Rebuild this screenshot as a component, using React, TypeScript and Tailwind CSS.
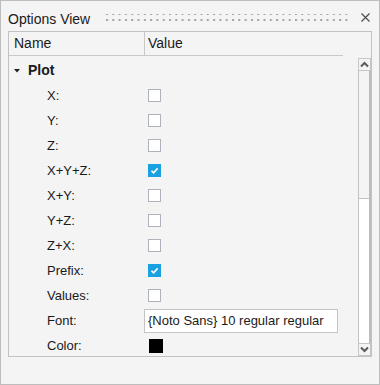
const rows: { label: string; kind: "check" | "font" | "color"; checked?: boolean }[] = [
  { label: "X:", kind: "check" },
  { label: "Y:", kind: "check" },
  { label: "Z:", kind: "check" },
  { label: "X+Y+Z:", kind: "check", checked: true },
  { label: "X+Y:", kind: "check" },
  { label: "Y+Z:", kind: "check" },
  { label: "Z+X:", kind: "check" },
  { label: "Prefix:", kind: "check", checked: true },
  { label: "Values:", kind: "check" },
  { label: "Font:", kind: "font" },
  { label: "Color:", kind: "color" },
];

function CheckBox({ checked }: { checked?: boolean }) {
  if (checked) {
    return (
      <div className="ml-[3px] flex h-[13px] w-[13px] items-center justify-center bg-[#1ba1e2]">
        <svg width="9" height="9" viewBox="0 0 9 9">
          <path d="M1.5 4.8 L3.6 6.8 L7.6 2.4" fill="none" stroke="white" strokeWidth="1.6" />
        </svg>
      </div>
    );
  }
  return <div className="ml-[3px] h-[13px] w-[13px] border border-[#aeb3bb] bg-white" />;
}

function Chevron({ up }: { up?: boolean }) {
  return (
    <svg width="9" height="7" viewBox="0 0 9 7">
      <path
        d={up ? "M1 5.5 L4.5 2 L8 5.5" : "M1 1.5 L4.5 5 L8 1.5"}
        fill="none"
        stroke="#5a5a5a"
        strokeWidth="2"
      />
    </svg>
  );
}

export default function App() {
  return (
    <div className="flex h-[385px] w-[380px] flex-col border border-[#bdbdbd] bg-[#f4f4f4] font-['Liberation_Sans',Arial,sans-serif] text-[#1a1a1a]">
      {/* Title bar */}
      <div className="flex h-[30px] items-center pl-[7px] pr-[9px]">
        <span className="mt-[6px] text-[14px] leading-none">Options View</span>
        <svg className="ml-[16px] mt-[2px] flex-1" height="9">
          <defs>
            <pattern id="grip" width="6.3" height="6" patternUnits="userSpaceOnUse">
              <rect x="0" y="0" width="2" height="2" fill="#a3a3a3" />
            </pattern>
          </defs>
          <rect x="0" y="1" width="100%" height="8" fill="url(#grip)" />
        </svg>
        <svg className="ml-[12px] mt-[3px]" width="9" height="9" viewBox="0 0 9 9">
          <path d="M0.5 0.5 L8.5 8.5 M8.5 0.5 L0.5 8.5" stroke="#4d4d4d" strokeWidth="1.2" />
        </svg>
      </div>

      {/* Table panel */}
      <div className="ml-[7px] flex h-[326px] w-[364px] flex-col overflow-hidden border border-[#c2c2c2]">
        <div className="flex h-[24px] w-[334px] shrink-0 border-b border-[#c8c8c8] text-[14px]">
          <div className="flex w-[136px] items-center border-r border-[#c8c8c8] pl-[5px]">Name</div>
          <div className="flex items-center pl-[3px]">Value</div>
        </div>

        <div className="flex min-h-0 flex-1 pt-[2px]">
          <div className="min-w-0 flex-1 overflow-hidden">
            <div className="flex h-[25px] items-center pl-[5px]">
              <svg width="6" height="4" viewBox="0 0 6 4">
                <path d="M0 0 H6 L3 3.5 Z" fill="#222" />
              </svg>
              <span className="ml-[8px] text-[14px] font-bold">Plot</span>
            </div>
            {rows.map((r) => (
              <div key={r.label} className="flex h-[25px] shrink-0 items-center text-[13px]">
                <div className="w-[136px] shrink-0 pl-[38px]">{r.label}</div>
                {r.kind === "check" && <CheckBox checked={r.checked} />}
                {r.kind === "font" && (
                  <div className="ml-[-1px] flex h-[24px] w-[194px] items-center border border-[#c4c4c4] bg-white pl-[3px]">
                    {"{Noto Sans} 10 regular regular"}
                  </div>
                )}
                {r.kind === "color" && <div className="ml-[4px] h-[14px] w-[14px] bg-black" />}
              </div>
            ))}
          </div>

          {/* Scrollbar */}
          <div className="flex w-[13px] shrink-0 flex-col">
            <div className="flex h-[13px] items-center justify-center border border-[#c6c6c6] bg-[#f4f4f4]">
              <Chevron up />
            </div>
            <div className="h-[128px] border-x border-b border-l-[#c2c2c2] border-r-[#bcbcbc] border-b-[#c2c2c2] border-r-2 bg-[#f4f4f4]" />
            <div className="flex-1 border-x border-l-[#c2c2c2] border-r-[#bcbcbc] border-r-2 bg-white" />
            <div className="flex h-[13px] items-center justify-center border border-[#c6c6c6] bg-[#f4f4f4]">
              <Chevron />
            </div>
          </div>
        </div>
      </div>
    </div>
  );
}
